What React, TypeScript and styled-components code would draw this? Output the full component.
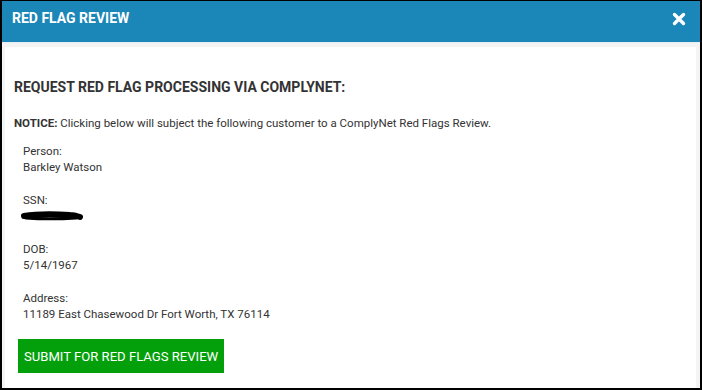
import React from "react";
import styled, { createGlobalStyle } from "styled-components";

const Global = createGlobalStyle`
  html, body {
    margin: 0;
    padding: 0;
    background: #fff;
  }
  body {
    font-family: Roboto, "Liberation Sans", Arial, sans-serif;
  }
`;

const Frame = styled.div`
  width: 702px;
  height: 390px;
  box-sizing: border-box;
  border: 2px solid #000;
  border-top-width: 1px;
  display: flex;
  flex-direction: column;
  background: #f4f4f4;
`;

const Header = styled.div`
  height: 42px;
  box-sizing: border-box;
  flex: none;
  background: #1b86b8;
  border-bottom: 1px solid #e8eef2;
  display: flex;
  align-items: flex-start;
  justify-content: space-between;
  padding: 8px 14px 0 10px;
  color: #fff;
`;

const Title = styled.h1`
  margin: 0;
  font-size: 14px;
  line-height: 18px;
  font-weight: 700;
`;

const Close = styled.button`
  border: 0;
  background: none;
  padding: 0;
  margin-top: 3px;
  width: 14px;
  height: 14px;
  display: flex;
  cursor: pointer;
`;

const Body = styled.div`
  flex: 1;
  margin: 4px 4px 0 3px;
  background: #fff;
  padding: 32px 9px 0;
  color: #333;
`;

const Heading = styled.h2`
  margin: 0 0 20px;
  font-size: 14px;
  font-weight: 700;
  color: #333;
`;

const Notice = styled.p`
  margin: 0 0 12px;
  font-size: 11.5px;
  line-height: 16px;
  strong {
    font-weight: 700;
  }
`;

const Fields = styled.div`
  padding-left: 9px;
  display: flex;
  flex-direction: column;
  gap: 17px;
`;

const Field = styled.div`
  font-size: 11.5px;
  line-height: 16px;
  color: #333;
`;

const Label = styled.div``;

const Value = styled.div``;

const Redacted = styled.div`
  height: 16px;
  display: flex;
  align-items: center;
  margin-left: -3px;
`;

const Submit = styled.button`
  margin-top: 17px;
  margin-left: 4px;
  background: #04a00c;
  color: #fff;
  border: 0;
  height: 34px;
  padding: 0 6px;
  font-family: Roboto, "Liberation Sans", Arial, sans-serif;
  font-size: 13.1px;
  cursor: pointer;
`;

const fields = [
  { label: "Person:", value: "Barkley Watson" },
  { label: "SSN:", value: null },
  { label: "DOB:", value: "5/14/1967" },
  { label: "Address:", value: "11189 East Chasewood Dr Fort Worth, TX 76114" },
];

export default function App() {
  return (
    <Frame>
      <Global />
      <Header>
        <Title>RED FLAG REVIEW</Title>
        <Close aria-label="close">
          <svg width="14" height="14" viewBox="0 0 14 14">
            <path d="M2.5 2.5 L11.5 11.5 M11.5 2.5 L2.5 11.5" stroke="#fff" strokeWidth="3.4" strokeLinecap="round" />
          </svg>
        </Close>
      </Header>
      <Body>
        <Heading>REQUEST RED FLAG PROCESSING VIA COMPLYNET:</Heading>
        <Notice>
          <strong>NOTICE:</strong> Clicking below will subject the following customer to a ComplyNet Red Flags Review.
        </Notice>
        <Fields>
          {fields.map((f) => (
            <Field key={f.label}>
              <Label>{f.label}</Label>
              {f.value ? (
                <Value>{f.value}</Value>
              ) : (
                <Redacted>
                  <svg width="64" height="12" viewBox="0 0 64 12">
                    <path d="M4 6 C16 4 34 4 50 5 C54 5 57 6 60 7" stroke="#000" strokeWidth="6" strokeLinecap="round" fill="none" />
                    <path d="M6 8 C20 9 40 9 56 8" stroke="#000" strokeWidth="3" strokeLinecap="round" fill="none" />
                  </svg>
                </Redacted>
              )}
            </Field>
          ))}
        </Fields>
        <Submit>SUBMIT FOR RED FLAGS REVIEW</Submit>
      </Body>
    </Frame>
  );
}
